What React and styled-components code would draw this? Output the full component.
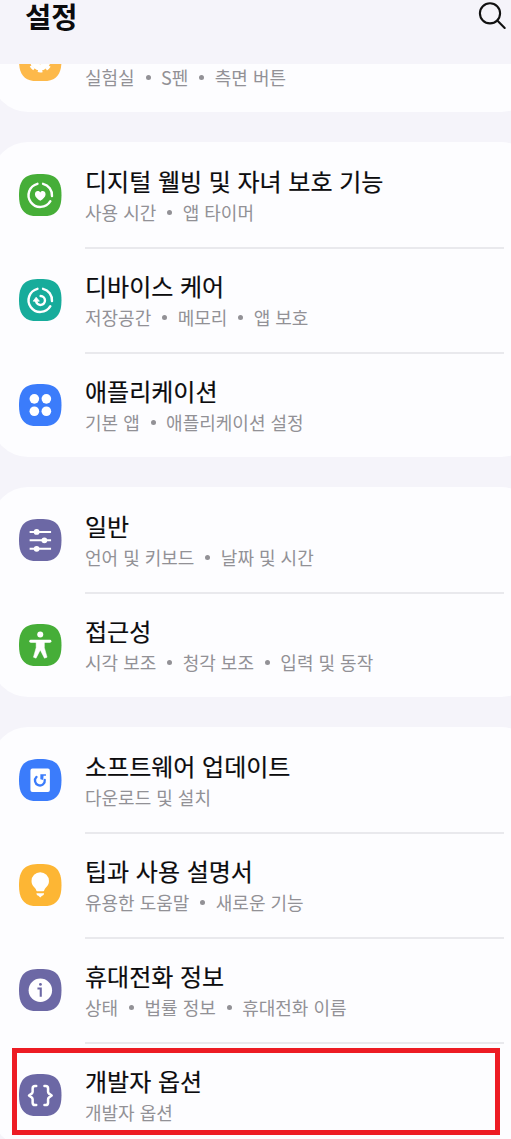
import React from "react";
import styled, { createGlobalStyle } from "styled-components";

const GlobalStyle = createGlobalStyle`
    * {
        box-sizing: border-box;
    }
    body {
        margin: 0;
        background: #f5f4fa;
        font-family: "Noto Sans CJK KR", "Noto Sans", sans-serif;
    }
`;

const SQUIRCLE =
    "M21.2 0C36.7 0 42.4 5.6 42.4 21.2S36.7 42.4 21.2 42.4 0 36.8 0 21.2 5.7 0 21.2 0Z";

const stroke = {
    fill: "none",
    stroke: "#fff",
    strokeLinecap: "round",
    strokeLinejoin: "round",
};

const Ring = () => (
    <g {...stroke} strokeWidth="2.4">
        <path d="M18.4 9.8A11.7 11.7 0 1 0 31.3 27.1" />
        <path d="M24 9.8A11.7 11.7 0 0 1 32.9 22" />
    </g>
);

const glyphs = {
    gear: (
        <g fill="none" stroke="#fff">
            <circle cx="21.2" cy="20.9" r="7.3" strokeWidth="6.2" />
            <circle
                cx="21.2"
                cy="20.9"
                r="11.2"
                strokeWidth="2.4"
                strokeDasharray="4.6 4.196"
                strokeDashoffset="2.3"
            />
        </g>
    ),
    wellbeing: (
        <>
            <Ring />
            <path
                d="M21.2 26.8C18.3 24.7 15.9 22.8 15.9 20.1c0-3.4 3.8-4.2 5.3-1.7 1.5-2.5 5.3-1.7 5.3 1.7 0 2.7-2.4 4.6-5.3 6.7Z"
                fill="#fff"
            />
        </>
    ),
    care: (
        <>
            <Ring />
            <path
                d="M21.6 16.9a4.5 4.5 0 1 1-4.6 5.4"
                {...stroke}
                strokeWidth="2.4"
            />
            <path
                d="M14.2 22.1l2.9-3.9 3.2 3.9Z"
                fill="#fff"
                stroke="#fff"
                strokeWidth=".8"
                strokeLinejoin="round"
            />
        </>
    ),
    apps: (
        <g fill="#fff">
            <circle cx="15.3" cy="14.8" r="4.8" />
            <circle cx="27.3" cy="14.8" r="4.8" />
            <circle cx="15.3" cy="27.2" r="4.8" />
            <circle cx="27.3" cy="27.2" r="4.8" />
        </g>
    ),
    sliders: (
        <>
            <path
                d="M10.6 12.9h21.4M10.6 21.3h21.4M10.6 29.8h21.4"
                {...stroke}
                strokeWidth="2"
                strokeLinecap="butt"
            />
            <g fill="#fff">
                <circle cx="17.6" cy="12.9" r="2.9" />
                <circle cx="25.3" cy="21.3" r="2.9" />
                <circle cx="17.6" cy="29.8" r="2.9" />
            </g>
        </>
    ),
    person: (
        <>
            <circle cx="21.2" cy="10.5" r="3" fill="#fff" />
            <path
                d="M11.7 17.2H30.9"
                {...stroke}
                strokeWidth="2.8"
            />
            <path
                d="M17.1 17.5h8.2v6.2l2.7 9.4-2.6 1-4.2-8.2-4.2 8.2-2.6-1 2.7-9.4Z"
                fill="#fff"
                stroke="#fff"
                strokeWidth=".5"
                strokeLinejoin="round"
            />
        </>
    ),
    update: (
        <>
            <rect x="11.4" y="9.6" width="19.4" height="23.4" rx="2" fill="#fff" />
            <path
                d="M17.5 17.9a4.9 4.9 0 1 0 8.2 2.9"
                fill="none"
                stroke="#3b7cfb"
                strokeWidth="2.3"
                strokeLinecap="round"
            />
            <path d="M21.3 15.1h5.6v1.7h-2.4l-.3 4.2-2.9-.9Z" fill="#3b7cfb" />
        </>
    ),
    bulb: (
        <g fill="#fff">
            <path d="M21.2 8.3a8.7 8.7 0 0 1 8.7 8.7c0 4.1-2.5 5.8-4 7.8-.7 1-.5 2.4-1.7 2.4h-6c-1.2 0-1-1.4-1.7-2.4-1.5-2-4-3.7-4-7.8a8.7 8.7 0 0 1 8.7-8.7Z" />
            <path d="M17.4 29.2h7.6c0 1.6-.9 2.1-2 2.5l-1.8 1.8-1.8-1.8c-1.1-.4-2-.9-2-2.5Z" />
        </g>
    ),
    info: (
        <>
            <circle cx="21.3" cy="21.2" r="11.7" fill="#fff" />
            <circle cx="21.4" cy="15.4" r="1.4" fill="#6c68a5" />
            <path
                d="M18.4 19.4h3.3v8.2"
                fill="none"
                stroke="#6c68a5"
                strokeWidth="2.1"
            />
        </>
    ),
    braces: (
        <path
            d="M17.2 12H16q-2.4 0-2.4 2.4v3.2q0 1.2-.9 2L10 21.5l2.7 1.9q.9.8.9 2v3.2q0 2.4 2.4 2.4h1.2M25.4 12h1.2q2.4 0 2.4 2.4v3.2q0 1.2.9 2l2.7 1.9-2.7 1.9q-.9.8-.9 2v3.2q0 2.4-2.4 2.4h-1.2"
            {...stroke}
            strokeWidth="2.5"
        />
    ),
};

const groups = [
    [{ icon: "gear", color: "#fdb94a", details: ["실험실", "S펜", "측면 버튼"] }],
    [
        {
            icon: "wellbeing",
            color: "#46ae38",
            title: "디지털 웰빙 및 자녀 보호 기능",
            details: ["사용 시간", "앱 타이머"],
        },
        {
            icon: "care",
            color: "#17ac9b",
            title: "디바이스 케어",
            details: ["저장공간", "메모리", "앱 보호"],
        },
        {
            icon: "apps",
            color: "#3b7cfb",
            title: "애플리케이션",
            details: ["기본 앱", "애플리케이션 설정"],
        },
    ],
    [
        {
            icon: "sliders",
            color: "#6c68a5",
            title: "일반",
            details: ["언어 및 키보드", "날짜 및 시간"],
        },
        {
            icon: "person",
            color: "#46ae38",
            title: "접근성",
            details: ["시각 보조", "청각 보조", "입력 및 동작"],
        },
    ],
    [
        {
            icon: "update",
            color: "#3b7cfb",
            title: "소프트웨어 업데이트",
            details: ["다운로드 및 설치"],
        },
        {
            icon: "bulb",
            color: "#fdb634",
            title: "팁과 사용 설명서",
            details: ["유용한 도움말", "새로운 기능"],
        },
        {
            icon: "info",
            color: "#6c68a5",
            title: "휴대전화 정보",
            details: ["상태", "법률 정보", "휴대전화 이름"],
        },
        {
            icon: "braces",
            color: "#6c68a5",
            title: "개발자 옵션",
            details: ["개발자 옵션"],
            highlighted: true,
        },
    ],
];

function SettingRow({ icon, color, title, details, highlighted }) {
    return (
        <Row>
            <Badge viewBox="0 0 42.4 42.4">
                <path d={SQUIRCLE} fill={color} />
                {glyphs[icon]}
            </Badge>
            <Content>
                <Title>{title}</Title>
                <Details>
                    {details.map((detail) => (
                        <Detail key={detail}>{detail}</Detail>
                    ))}
                </Details>
            </Content>
            {highlighted && <Highlight />}
        </Row>
    );
}

function App() {
    return (
        <Screen>
            <GlobalStyle />
            <Header>
                <Heading>설정</Heading>
                <SearchIcon viewBox="0 0 30 30">
                    <circle cx="13" cy="13.3" r="10.1" />
                    <path d="M20.3 20.6l7.4 7.4" />
                </SearchIcon>
            </Header>
            <List>
                {groups.map((rows, index) => (
                    <Card key={index}>
                        {rows.map((row) => (
                            <SettingRow key={row.icon} {...row} />
                        ))}
                    </Card>
                ))}
            </List>
        </Screen>
    );
}

export default App;

const Screen = styled.div`
    width: 511px;
    height: 1139px;
    overflow: hidden;
    display: flex;
    flex-direction: column;
`;

const Header = styled.header`
    flex: none;
    height: 64px;
    padding-left: 25px;
    padding-right: 4px;
    display: flex;
    justify-content: space-between;
    align-items: flex-start;
`;

const Heading = styled.h1`
    margin: 0;
    font-size: 28.5px;
    font-weight: 700;
    line-height: 32px;
    color: #0b0b0d;
`;

const SearchIcon = styled.svg`
    width: 30px;
    height: 30px;
    fill: none;
    stroke: #111;
    stroke-width: 2.1;
    stroke-linecap: round;
`;

/* scrolled so that the first card is cut by the header */
const List = styled.main`
    flex: 1;
    min-height: 0;
    overflow: hidden;
    display: flex;
    flex-direction: column;
    gap: 30px;

    & > :first-child {
        margin-top: -57px;
    }
`;

const Card = styled.section`
    flex: none;
    margin-left: -8px;
    width: 545px;
    padding-right: 33px;
    border-radius: 36px;
    background: #fdfdff;
`;

const Content = styled.div`
    width: 419.5px;
    height: 105px;
    padding-top: 22px;
    border-top: 2px solid transparent;
`;

const Row = styled.div`
    position: relative;
    height: 105px;
    padding-left: 27px;
    display: flex;
    align-items: flex-start;
    gap: 23.5px;

    & + & ${Content} {
        border-top-color: #e9e9ed;
    }
`;

const Badge = styled.svg`
    flex: none;
    width: 42.5px;
    height: 42.5px;
    margin-top: 31.6px;
`;

const Title = styled.div`
    height: 30px;
    line-height: 30px;
    font-size: 24px;
    font-weight: 400;
    word-spacing: 1.3px;
    color: #0b0b0d;
    -webkit-text-stroke: 0.2px #0b0b0d;
    white-space: nowrap;
`;

const Details = styled.div`
    display: flex;
    margin-top: 4px;
    line-height: 24px;
    font-size: 18px;
    word-spacing: 1px;
    color: #929196;
    white-space: nowrap;
`;

const Detail = styled.span`
    display: flex;
    align-items: center;

    & + &::before {
        content: "";
        width: 5px;
        height: 5px;
        margin: 1px 10.4px 0 11px;
        border-radius: 50%;
        background: #929196;
    }
`;

const Highlight = styled.div`
    position: absolute;
    left: 20px;
    top: 6px;
    width: 488px;
    height: 87px;
    border: 5px solid #ed1c24;
`;
